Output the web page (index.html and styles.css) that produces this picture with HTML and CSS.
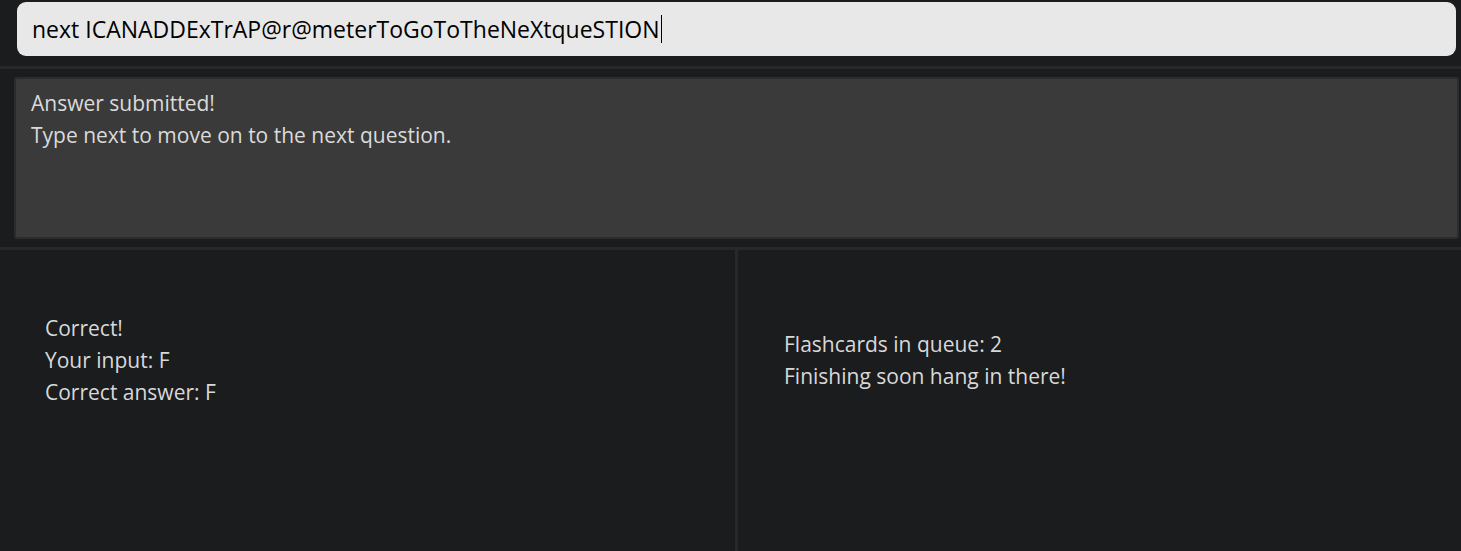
FILE: index.html
```html
<!DOCTYPE html>
<html lang="en">
<head>
<meta charset="utf-8">
<title>Flashcards</title>
<link rel="stylesheet" href="styles.css">
</head>
<body>
<div class="app">
  <div class="command-bar">
    <div class="command-box"><span class="command-text">next ICANADDExTrAP@r@meterToGoToTheNeXtqueSTION</span><span class="caret"></span></div>
  </div>
  <div class="divider"></div>
  <div class="result-area">
    <div class="result-box">
      <div class="line">Answer submitted!</div>
      <div class="line">Type next to move on to the next question.</div>
    </div>
  </div>
  <div class="divider"></div>
  <div class="panels">
    <div class="panel panel-left">
      <div class="line">Correct!</div>
      <div class="line">Your input: F</div>
      <div class="line">Correct answer: F</div>
    </div>
    <div class="vdivider"></div>
    <div class="panel panel-right">
      <div class="line">Flashcards in queue: 2</div>
      <div class="line">Finishing soon hang in there!</div>
    </div>
  </div>
</div>
</body>
</html>
```
FILE: styles.css
```css
*, *::before, *::after {
  box-sizing: border-box;
}
html, body {
  margin: 0;
  padding: 0;
  background: #1b1c1e;
  height: 100%;
  overflow: hidden;
}
.app {
  font-family: "Open Sans", "Liberation Sans", sans-serif;
  font-size: 21px;
  color: #d8d8d8;
  display: flex;
  flex-direction: column;
  height: 100%;
}
.command-bar {
  padding: 2px 5px 10px 17px;
}
.command-box {
  height: 54px;
  background: #e8e8e8;
  border-radius: 9px;
  padding-left: 15px;
  display: flex;
  align-items: center;
  color: #000;
  font-size: 23px;
}
.caret {
  display: inline-block;
  width: 1px;
  height: 28px;
  background: #000;
  margin-left: 1px;
}
.divider {
  height: 3px;
  background: #27282a;
  flex: none;
}
.result-area {
  padding: 8px 2px 8px 14px;
}
.result-box {
  height: 162px;
  background: #3a3a3a;
  border: 2px solid #2c2c2c;
  border-radius: 3px;
  padding: 8px 15px 0 15px;
}
.line {
  height: 32px;
  line-height: 32px;
  white-space: nowrap;
}
.result-box .line {
  color: #dadada;
}
.panels {
  flex: 1;
  display: flex;
}
.panel {
  display: flex;
  flex-direction: column;
}
.panel-left {
  width: 735px;
  padding: 62px 0 0 45px;
}
.vdivider {
  width: 3px;
  background: #27282a;
}
.panel-right {
  flex: 1;
  padding: 78px 0 0 46px;
}
```
